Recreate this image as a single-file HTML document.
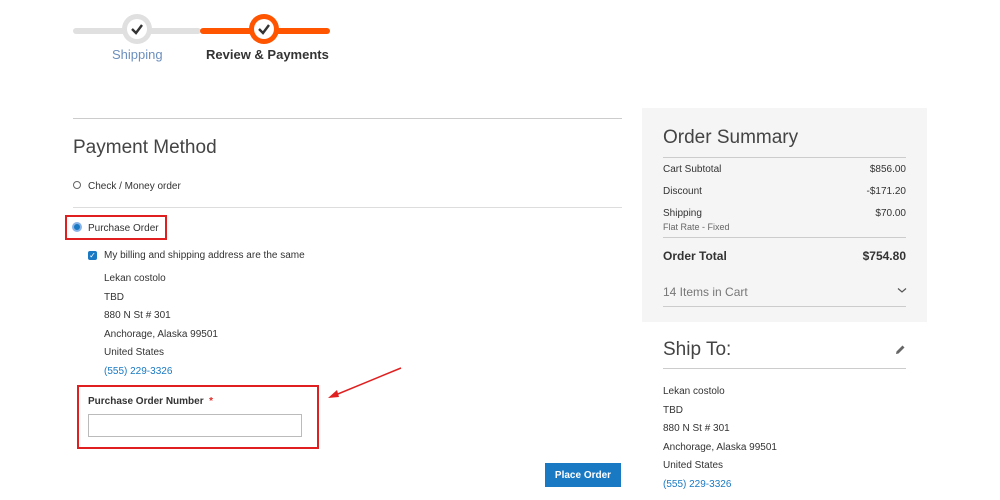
<!DOCTYPE html>
<html><head><style>
*{margin:0;padding:0;box-sizing:border-box}
body{width:1000px;height:500px;background:#fff;font-family:"Liberation Sans",sans-serif;color:#333;position:relative;overflow:hidden}
.a{position:absolute;white-space:nowrap}
.s{font-size:10px}
.h{color:#444;font-size:19px}
</style></head><body>
<div class="a" style="left:73px;top:28px;width:128px;height:6px;background:#e0e0e0;border-radius:3px"></div>
<div class="a" style="left:200px;top:28px;width:130px;height:6px;background:#ff5501;border-radius:3px"></div>
<div class="a" style="left:122px;top:14px;width:30px;height:30px;border-radius:50%;background:#e0e0e0"></div>
<div class="a" style="left:127px;top:19px;width:20px;height:20px;border-radius:50%;background:#fff"></div>
<svg class="a" style="left:130px;top:22px" width="14" height="14"><path d="M2 7 L6 11 L12 3" fill="none" stroke="#333" stroke-width="2.4"/></svg>
<div class="a" style="left:249px;top:14px;width:30px;height:30px;border-radius:50%;background:#ff5501"></div>
<div class="a" style="left:254px;top:19px;width:20px;height:20px;border-radius:50%;background:#fff"></div>
<svg class="a" style="left:257px;top:22px" width="14" height="14"><path d="M2 7 L6 11 L12 3" fill="none" stroke="#333" stroke-width="2.4"/></svg>
<div class="a" style="left:112px;top:47px;font-size:13px;color:#6c8fbd">Shipping</div>
<div class="a" style="left:206px;top:47px;font-size:13px;font-weight:bold;color:#333">Review &amp; Payments</div>

<div class="a" style="left:73px;top:118px;width:549px;height:1px;background:#ccc"></div>
<div class="a h" style="left:73px;top:137px">Payment Method</div>
<div class="a" style="left:73px;top:181px;width:8px;height:8px;border:1px solid #666;border-radius:50%"></div>
<div class="a s" style="left:88px;top:181px">Check / Money order</div>
<div class="a" style="left:73px;top:207px;width:549px;height:1px;background:#ddd"></div>
<div class="a" style="left:65px;top:215px;width:102px;height:25px;border:2px solid #e02020"></div>
<div class="a" style="left:72px;top:222px;width:10px;height:10px;border:2px solid #8ab4e8;border-radius:50%;background:#1979c3"></div>
<div class="a s" style="left:88px;top:223px">Purchase Order</div>
<div class="a" style="left:88px;top:251px;width:9px;height:9px;background:#1979c3;border-radius:2px;color:#fff;font-size:8px;line-height:9px;text-align:center">✓</div>
<div class="a s" style="left:104px;top:250px">My billing and shipping address are the same</div>
<div class="a s" style="left:104px;top:270px;line-height:18.6px">Lekan costolo<br>TBD<br>880 N St # 301<br>Anchorage, Alaska 99501<br>United States<br><span style="color:#1979c3">(555) 229-3326</span></div>
<div class="a" style="left:77px;top:385px;width:242px;height:64px;border:2px solid #e02020"></div>
<div class="a s" style="left:88px;top:396px;font-weight:bold">Purchase Order Number <span style="color:#e02b27">&nbsp;*</span></div>
<div class="a" style="left:88px;top:414px;width:214px;height:23px;border:1px solid #bbb"></div>
<svg class="a" style="left:325px;top:364px" width="80" height="36"><line x1="76" y1="4" x2="8" y2="32" stroke="#e02020" stroke-width="1.5"/><polygon points="3,34 12,26 14,33" fill="#e02020"/></svg>
<div class="a" style="left:545px;top:463px;width:76px;height:24px;background:#1979c3;color:#fff;font-size:10px;font-weight:bold;display:flex;align-items:center;justify-content:center">Place Order</div>

<div class="a" style="left:642px;top:108px;width:285px;height:214px;background:#f5f5f5"></div>
<div class="a h" style="left:663px;top:127px">Order Summary</div>
<div class="a" style="left:663px;top:157px;width:243px;height:1px;background:#ccc"></div>
<div class="a s" style="left:663px;top:164px">Cart Subtotal</div><div class="a s" style="right:94px;top:164px">$856.00</div>
<div class="a s" style="left:663px;top:186px">Discount</div><div class="a s" style="right:94px;top:186px">-$171.20</div>
<div class="a s" style="left:663px;top:208px">Shipping</div><div class="a s" style="right:94px;top:208px">$70.00</div>
<div class="a" style="left:663px;top:222px;font-size:9px;color:#666">Flat Rate - Fixed</div>
<div class="a" style="left:663px;top:237px;width:243px;height:1px;background:#ccc"></div>
<div class="a" style="left:663px;top:249px;font-size:12px;font-weight:bold">Order Total</div><div class="a" style="right:94px;top:249px;font-size:12px;font-weight:bold">$754.80</div>
<div class="a" style="left:663px;top:285px;font-size:12px;color:#777">14 Items in Cart</div>
<svg class="a" style="left:897px;top:287px" width="10" height="7"><path d="M1 1.5 L5 5 L9 1.5" fill="none" stroke="#555" stroke-width="1.2"/></svg>
<div class="a" style="left:663px;top:306px;width:243px;height:1px;background:#ccc"></div>
<div class="a h" style="left:663px;top:339px">Ship To:</div>
<svg class="a" style="left:894px;top:344px" width="12" height="12"><path d="M2 10 L2.5 7.5 L8.5 1.5 L10.5 3.5 L4.5 9.5 Z" fill="#666"/></svg>
<div class="a" style="left:663px;top:368px;width:243px;height:1px;background:#ccc"></div>
<div class="a s" style="left:663px;top:383px;line-height:18.6px">Lekan costolo<br>TBD<br>880 N St # 301<br>Anchorage, Alaska 99501<br>United States<br><span style="color:#1979c3">(555) 229-3326</span></div>
</body></html>
